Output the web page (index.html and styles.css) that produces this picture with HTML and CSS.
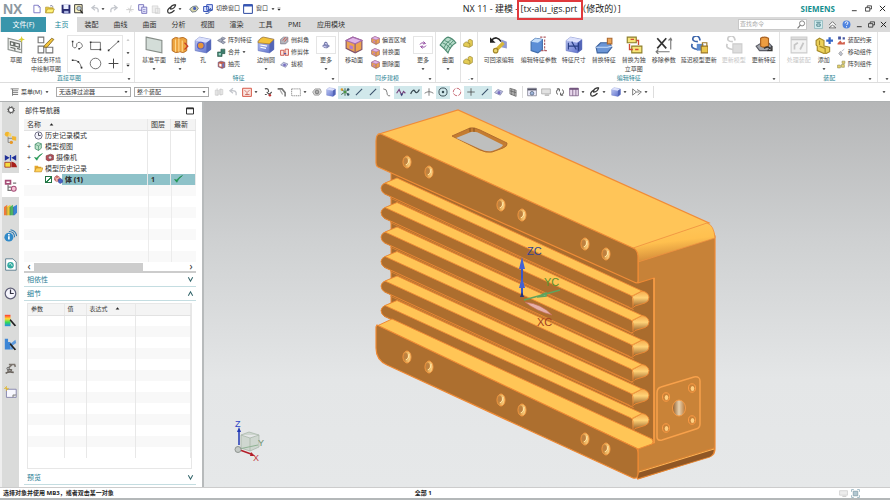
FILE: index.html
```html
<!DOCTYPE html>
<html lang="zh-CN">
<head>
<meta charset="utf-8">
<title>NX 11 - 建模</title>
<link rel="stylesheet" href="styles.css">
</head>
<body>
<svg class="defs" aria-hidden="true">
  <defs>
    <linearGradient id="gBlue" x2="1" y2="1"><stop offset="0" stop-color="#c4cdf5"/><stop offset="1" stop-color="#5468c8"/></linearGradient>
    <linearGradient id="gRain" x2="0" y2="1"><stop offset="0" stop-color="#f33"/><stop offset=".35" stop-color="#fd3"/><stop offset=".65" stop-color="#3d5"/><stop offset="1" stop-color="#28e"/></linearGradient>
    <linearGradient id="gEnd" x2="0" y2="1"><stop offset="0" stop-color="#f5a94a"/><stop offset=".4" stop-color="#ffd277"/><stop offset="1" stop-color="#8c5220"/></linearGradient>
    <linearGradient id="gRound" x2=".25" y2="1"><stop offset="0" stop-color="#ffc95c"/><stop offset=".55" stop-color="#ffc04f"/><stop offset="1" stop-color="#d18838"/></linearGradient>
    <linearGradient id="gHole" x2="1"><stop offset="0" stop-color="#a86a2c"/><stop offset=".45" stop-color="#e9ad58"/><stop offset="1" stop-color="#ffdc90"/></linearGradient>
    <linearGradient id="gBore" x2="1"><stop offset="0" stop-color="#8e5824"/><stop offset=".5" stop-color="#e8d2b0"/><stop offset="1" stop-color="#b77431"/></linearGradient>
  </defs>
  <symbol id="new" viewBox="0 0 16 16"><path d="M3 2h7l3 3v9H3z" fill="#fff" stroke="#7d78c4" stroke-width="1.5"/><path d="M10 2v3h3" fill="none" stroke="#7d78c4"/></symbol>
  <symbol id="open" viewBox="0 0 16 16"><path d="M1 5h5l1 1h6v8H1z" fill="#e9c944" stroke="#a68c1e"/><path d="M1 14l3-6h11l-3 6z" fill="#fff27a" stroke="#a68c1e"/><path d="M8 3q4-2 5 2" fill="none" stroke="#557"/></symbol>
  <symbol id="save" viewBox="0 0 16 16"><path d="M1 1h14v14H3l-2-2z" fill="#2b2d72"/><path d="M4 1h8v7H4z" fill="#e9edff"/><path d="M5 11h7v4H5z" fill="#aab3e0"/></symbol>
  <symbol id="saveas" viewBox="0 0 16 16"><path d="M1 1h12v13H1z" fill="#fff8c7" stroke="#333" stroke-width="1.5"/><circle cx="8" cy="7" r="3.5" fill="#bcd" stroke="#444"/><path d="M10 10l4 5" stroke="#222" stroke-width="2"/></symbol>
  <symbol id="undo" viewBox="0 0 16 16"><path d="M13 13V9Q12 5 4 6M8 2L3 6l5 4" fill="none" stroke="#c3c6cc" stroke-width="2"/></symbol>
  <symbol id="redo" viewBox="0 0 16 16"><path d="M3 13V9Q4 5 12 6M8 2l5 4-5 4" fill="none" stroke="#c3c6cc" stroke-width="2"/></symbol>
  <symbol id="cut" viewBox="0 0 16 16"><path d="M2 9h12M10 2L7 14M5 6l6 6" fill="none" stroke="#ccc" stroke-width="1.5"/></symbol>
  <symbol id="copy" viewBox="0 0 16 16"><path d="M1 1h8v9H1z" fill="#f1efff" stroke="#706bb8" stroke-width="1.4"/><path d="M6 5h8v10H6z" fill="#e5e6fc" stroke="#706bb8" stroke-width="1.4"/><path d="M8 9h4M8 12h4" stroke="#706bb8"/></symbol>
  <symbol id="paste" viewBox="0 0 16 16"><path d="M2 3h9v11H2zM7 7h7v8H7z" fill="#eee" stroke="#ccc"/></symbol>
  <symbol id="brush" viewBox="0 0 16 16"><path d="M14 1Q5 2 6 8q6 0 8-7M6 5q-7 4-4 9q4 2 10-4" fill="none" stroke="#333" stroke-width="2"/></symbol>
  <symbol id="touch" viewBox="0 0 16 16"><path d="M1 8l5-4 6-1 3 4-4 5-6 1z" fill="#d8d5a8" stroke="#567" stroke-width="1.2"/><circle cx="9" cy="7" r="2.5" fill="#4660b8"/></symbol>
  <symbol id="switch" viewBox="0 0 16 16"><path d="M1 4h8v8H1zM6 1h9v9H6z" fill="#dbe4ff" stroke="#3a55b8" stroke-width="1.6"/><path d="M4 15q7 1 8-6M9 10l3-3 2 4" fill="none" stroke="#234aa8" stroke-width="1.5"/></symbol>
  <symbol id="win" viewBox="0 0 16 16"><path d="M1 1h14v14H1z" fill="#fff" stroke="#2c49a0" stroke-width="1.6"/><path d="M1 1h14v3H1z" fill="#3556b8"/></symbol>
  <symbol id="down" viewBox="0 0 16 16"><path d="M2 5h12l-6 7z" fill="#222"/></symbol>
  <symbol id="up" viewBox="0 0 16 16"><path d="M2 11h12L8 4z" fill="#222"/></symbol>
  <symbol id="more" viewBox="0 0 16 16"><path d="M2 8h12l-6 7zM2 3h12v2H2z" fill="#222"/></symbol>
  <symbol id="chevd" viewBox="0 0 16 16"><path d="M3 3l5 9 5-9" fill="none" stroke="#33656b" stroke-width="2.4"/></symbol>
  <symbol id="chevu" viewBox="0 0 16 16"><path d="M3 13l5-9 5 9" fill="none" stroke="#33656b" stroke-width="2.4"/></symbol>
  <symbol id="min" viewBox="0 0 16 16"><path d="M2 13h11" stroke="#222" stroke-width="2"/></symbol>
  <symbol id="restore" viewBox="0 0 16 16"><path d="M5 5V2h10v7h-4M1 6h10v8H1z" fill="none" stroke="#222" stroke-width="1.8"/></symbol>
  <symbol id="close" viewBox="0 0 16 16"><path d="M2 2l12 12M14 2L2 14" stroke="#222" stroke-width="2.2"/></symbol>
  <symbol id="max" viewBox="0 0 16 16"><path d="M1 2h14v12H1z" fill="none" stroke="#333" stroke-width="2"/><path d="M1 3h14" stroke="#333" stroke-width="3"/></symbol>
  <symbol id="search" viewBox="0 0 16 16"><circle cx="9" cy="6" r="4.5" fill="#fff" stroke="#777" stroke-width="1.6"/><path d="M6 9l-5 6" stroke="#777" stroke-width="2"/></symbol>
  <symbol id="screen" viewBox="0 0 16 16"><path d="M1 1h14v14H1z" fill="#d6eef0" stroke="#69a4ac"/><path d="M4 4h8M5 7h6v4H5z" fill="none" stroke="#3b727c" stroke-width="1.5"/></symbol>
  <symbol id="ribup" viewBox="0 0 16 16"><path d="M2 9l6-6 6 6M2 14l6-5 6 5z" fill="#fff" stroke="#555" stroke-width="1.4"/></symbol>
  <symbol id="help" viewBox="0 0 16 16"><circle cx="8" cy="8" r="7" fill="#4f83df"/><path d="M5.500 6q0-3 2.500-3t2.500 2q0 2-2.500 4M8 11v2" fill="none" stroke="#fff" stroke-width="1.700"/></symbol>
  <symbol id="sketch" viewBox="0 0 16 16"><path d="M1 2l12 3v10L1 12z" fill="#eef0ee" stroke="#8c918d"/><path d="M3 5l3 .7v3L3 8zM7 6l4 1v3L7 9zM3 10l4 1v2M9 11l3 1" fill="none" stroke="#646a65"/><path d="M13 0l.8 2.200L16 3l-2.200.8L13 6l-.8-2.200L10 3l2.200-.8z" fill="#d9cf35"/></symbol>
  <symbol id="tasksketch" viewBox="0 0 16 16"><path d="M1 1h5v5H1zM1 9h5v6H1zM8 10h6v5H8z" fill="#fff" stroke="#777"/><path d="M6 10l1-2 6-6 2 1-6 7z" fill="#f2c43c" stroke="#775c1d" stroke-width=".7"/></symbol>
  <symbol id="profile" viewBox="0 0 16 16"><path d="M2 3v6q3 4 5 0V6q3-4 6 0t-3 6" fill="none" stroke="#555"/><path d="M1 2h2v2H1zM9 11h2v2H9z" fill="#333"/></symbol>
  <symbol id="rect" viewBox="0 0 16 16"><path d="M2 4h12v9H2z" fill="none" stroke="#555"/><path d="M1 3h2v2H1zM13 12h2v2h-2z" fill="#333"/></symbol>
  <symbol id="line" viewBox="0 0 16 16"><path d="M2 14L14 3" stroke="#555"/><path d="M1 13h2v2H1zM13 2h2v2h-2z" fill="#333"/></symbol>
  <symbol id="arc" viewBox="0 0 16 16"><path d="M2 4q9-1 11 10" fill="none" stroke="#555"/><path d="M1 3h2v2H1zM8 5h2v2H8zM12 12h2v2h-2z" fill="#333"/></symbol>
  <symbol id="circle" viewBox="0 0 16 16"><circle cx="8" cy="8" r="6.500" fill="none" stroke="#555"/></symbol>
  <symbol id="plus" viewBox="0 0 16 16"><path d="M8 2v12M2 8h12" stroke="#444" stroke-width="1.200"/></symbol>
  <symbol id="plane" viewBox="0 0 16 16"><path d="M1 1l14 3v11L1 12z" fill="#d3ddd8" stroke="#868d88"/></symbol>
  <symbol id="extrude" viewBox="0 0 16 16"><path d="M1 3q3-3 6-1q4-2 7 1v10q-3 3-6 1q-4 2-7-1z" fill="#eda33e" stroke="#a9601c" stroke-width=".7"/><path d="M4 3v11M7 2v12M10 4v10" stroke="#ffd78d"/><path d="M12 6l3 3-3 3" fill="none" stroke="#c83827"/></symbol>
  <symbol id="cube" viewBox="0 0 16 16"><path d="M1 4l4-3 10 2v9l-4 3-10-2z" fill="url(#gBlue)" stroke="#6272bd" stroke-width=".5"/><path d="M1 4l10 2 4-3L5 1z" fill="#dce1fc"/><path d="M11 6l4-3v9l-4 3z" fill="#5365b7"/></symbol>
  <symbol id="hole" viewBox="0 0 16 16"><use href="#cube"/><circle cx="6" cy="8.500" r="3" fill="#e5943a" stroke="#585fc2"/></symbol>
  <symbol id="blend" viewBox="0 0 16 16"><use href="#cube"/><path d="M1 5q2-4 5-4l9 2-4 4-10-1z" fill="#f3c23a" stroke="#a47622" stroke-width=".6"/><path d="M3 8l6 1M3 10l5 1" stroke="#fff"/></symbol>
  <symbol id="pattern" viewBox="0 0 16 16"><path d="M1 8l5-3 5 2-5 4zM7 4l3-2 5 2-3 3zM7 11l3-2 5 2-4 3z" fill="#a6abc0" stroke="#5f657b"/></symbol>
  <symbol id="unite" viewBox="0 0 16 16"><path d="M1 7h6V2h7v8H9v5H1z" fill="#3d7c6d" stroke="#23503f"/><path d="M3 9h4v4H3z" fill="#9bd4c3"/></symbol>
  <symbol id="shell" viewBox="0 0 16 16"><path d="M2 4l5-2 7 2v9l-5 2-7-3z" fill="#c45b46" stroke="#5b5b8e"/><path d="M4 6l4 1v5l-4-1z" fill="#fff"/><path d="M11 6v7" stroke="#6576c6" stroke-width="3"/></symbol>
  <symbol id="solid" viewBox="0 0 16 16"><path d="M1 4l4-3 5 3v5l-5 3-4-3z" fill="#d9776e" stroke="#9b3e46"/><path d="M1 4l4 3 5-3M5 7v5" fill="none" stroke="#fff"/><path d="M8 8l4-2 3 3v4l-4 2-3-2z" fill="#4a62c4" stroke="#2c3f96"/></symbol>
  <symbol id="chamfer" viewBox="0 0 16 16"><path d="M1 6l5-4h8v8l-4 4H1z" fill="#b6b6bc" stroke="#66667a"/><path d="M5 8l5-6M8 10l5-6" stroke="#d74f42" stroke-width="1.500"/></symbol>
  <symbol id="trim" viewBox="0 0 16 16"><path d="M1 4h6v9H1zM9 2h6v11H9z" fill="#fbe3dd" stroke="#c84a3c" stroke-width="1.500"/><path d="M7 10h4" stroke="#4b56a8" stroke-width="2"/></symbol>
  <symbol id="draft" viewBox="0 0 16 16"><path d="M1 9l5-5 8 3-4 6z" fill="#c3c7e6" stroke="#6b6e96"/><circle cx="8" cy="9" r="2.500" fill="#7a71c2"/></symbol>
  <symbol id="body" viewBox="0 0 16 16"><path d="M1 10l3-3 2-5 4 1 1 4 4 3-5 4-6-1z" fill="#8288b8" stroke="#4b518a"/><path d="M6 5l4 1M3 11l6 1" stroke="#ded9fa" stroke-width="2"/></symbol>
  <symbol id="moveface" viewBox="0 0 16 16"><path d="M1 4l6-3 8 3v8l-6 3-8-4z" fill="#eda24f" stroke="#80516a"/><path d="M1 4l8 3 6-3-8-3z" fill="#e1b6e8" stroke="#a56bb0"/><path d="M9 7v8" stroke="#8a5c7c"/><path d="M4 8l3 1v3l-3-1z" fill="#b47ad1"/></symbol>
  <symbol id="cycle" viewBox="0 0 16 16"><path d="M2 7q2-5 8-3M14 9q-2 5-8 3M9 1l4 4-5 1M7 15l-4-4 5-1" fill="none" stroke="#9550a4" stroke-width="2"/></symbol>
  <symbol id="surface" viewBox="0 0 16 16"><path d="M1 8q5-7 7-7q4 1 7 5-5 3-7 9-3-4-7-7z" fill="#b6dcca" stroke="#4f8c73"/><path d="M3 6q4 1 7 5M5 4q4 1 7 5M4 11q2-5 7-8M6 13q2-5 7-9" fill="none" stroke="#4f8c73" stroke-width=".8"/></symbol>
  <symbol id="gold" viewBox="0 0 16 16"><path d="M1 9l4-3 3 2V4l3-2 4 2v8l-5 3-9-2z" fill="#e4cc55" stroke="#94802c"/><path d="M8 8l3 1v5" fill="none" stroke="#8b772a"/></symbol>
  <symbol id="rollback" viewBox="0 0 16 16"><path d="M1 4q5-5 9 1" fill="none" stroke="#222" stroke-width="1.500"/><path d="M0 1v5h5z" fill="#222"/><path d="M10 3l5 2v6l-5-1z" fill="#919bd0"/><path d="M12 6L6 12" stroke="#d8b839" stroke-width="3"/><circle cx="5" cy="13" r="2" fill="#ead46b" stroke="#a28527"/></symbol>
  <symbol id="editpar" viewBox="0 0 16 16"><path d="M1 5l4-3 6 1v9l-4 3-6-2z" fill="#5b8ed6" stroke="#416eab"/><path d="M1 5l6 1 4-3-6-1z" fill="#c2dcf8"/><path d="M9 1h5M13 3v10M10 13h5" stroke="#ad5c63" stroke-dasharray="2 1"/></symbol>
  <symbol id="dim" viewBox="0 0 16 16"><use href="#cube"/><path d="M3 12V6M3 9h9M12 6v7M6 5l4 7" stroke="#293f86" fill="none"/></symbol>
  <symbol id="replace" viewBox="0 0 16 16"><path d="M1 10l4-4h8l2 4-4 5H2z" fill="#6b95d6" stroke="#3f649e"/><path d="M1 10h10l4-1" stroke="#c8ddfa" fill="none"/><path d="M11 2h4v5h-4z" fill="#eda556" stroke="#ac6930"/></symbol>
  <symbol id="repsketch" viewBox="0 0 16 16"><path d="M2 1h8v5H2zM6 9h9v6H6z" fill="#f7e579" stroke="#8c7d28"/><path d="M4 7v5h3M12 8V4h-2M5 3h3M9 12h3" fill="none" stroke="#d14b34" stroke-width="1.200"/></symbol>
  <symbol id="removepar" viewBox="0 0 16 16"><path d="M2 2l8 9M10 2l-8 9" stroke="#333" stroke-width="1.500"/><path d="M1 14h12M14 2v10M12 4l2-2 1 2M3 12l-2 2 2 2" fill="none" stroke="#777"/></symbol>
  <symbol id="delay" viewBox="0 0 16 16"><path d="M7 5Q1 5 3 1q5-3 6 3M2 7q-2 4 5 5" fill="none" stroke="#3c65aa" stroke-width="1.500"/><path d="M6 7h6v6H6z" fill="#5d8cd0"/><path d="M10 9h6v6h-6z" fill="#eac64d" stroke="#9b7626"/><path d="M11 9V6h4v3" fill="none" stroke="#9b7626"/></symbol>
  <symbol id="updmodel" viewBox="0 0 16 16"><path d="M7 5Q1 5 3 1q5-3 6 3M2 7q-2 4 5 5" fill="none" stroke="#ccc" stroke-width="1.500"/><path d="M7 7h8v8H7z" fill="#ddd" stroke="#ccc"/></symbol>
  <symbol id="updfeat" viewBox="0 0 16 16"><path d="M1 9l5-3h6l3 3-4 4H4z" fill="#a5a7ad" stroke="#5a5c65"/><path d="M5 2q3-2 7 0v7q-4 2-7 0z" fill="#ec9d42" stroke="#a86020"/><path d="M8 11q4-3 6 1M15 9v4h-4" fill="none" stroke="#333" stroke-width="1.300"/></symbol>
  <symbol id="process" viewBox="0 0 16 16"><path d="M1 1h14v14H1z" fill="#f3f3f3" stroke="#ccc"/><path d="M1 3h14M4 12V8l3-2M9 12l3-6" stroke="#c6c6c6" stroke-width="1.500" fill="none"/></symbol>
  <symbol id="add" viewBox="0 0 16 16"><path d="M1 4l3-2 4 2v5l5 1v4l-4 2-7-3V9L1 8z" fill="#ecd15b" stroke="#a58a29"/><path d="M4 9l5 2v4M4 4v4" fill="none" stroke="#a58a29"/><path d="M13 1v6M10 4h6" stroke="#3767c7" stroke-width="2"/></symbol>
  <symbol id="constraint" viewBox="0 0 16 16"><path d="M2 1h5v5H2zM10 2h4v4h-4z" fill="#4656a0"/><path d="M1 13l5-5 3 4 5-2v5H1z" fill="#d3604c"/></symbol>
  <symbol id="movecomp" viewBox="0 0 16 16"><path d="M3 10l3-4 4 4-3 4z" fill="#bfc3cf" stroke="#888"/><path d="M8 6l5-4" stroke="#889"/></symbol>
  <symbol id="pattcomp" viewBox="0 0 16 16"><path d="M1 9h5v5H1zM8 8h5v5H8zM9 2h5v4H9z" fill="#e6d36f" stroke="#8d8549"/></symbol>
  <symbol id="ghost" viewBox="0 0 16 16"><path d="M2 5h5v8H2zM9 4h5v8H9zM5 2v12M11 2v12" fill="#eee" stroke="#c3c3c3"/></symbol>
  <symbol id="redbox" viewBox="0 0 16 16"><path d="M1 2h14v13H1z" fill="#fbe4df" stroke="#d4503f" stroke-width="1.500"/><path d="M4 5l3 3m5-3L9 8M5 12h7M8 8v4" stroke="#b53a2d"/></symbol>
  <symbol id="snaparrow" viewBox="0 0 16 16"><path d="M3 3q6-2 6 5M6 8l4 4 4-4M3 12h3" fill="none" stroke="#555" stroke-width="1.700"/><circle cx="11" cy="13" r="2" fill="#b33"/></symbol>
  <symbol id="flagd" viewBox="0 0 16 16"><path d="M1 3h7l5 6v6" fill="none" stroke="#777" stroke-width="2.500"/><path d="M5 5l4 7" stroke="#aaa" stroke-width="2"/></symbol>
  <symbol id="dashbox" viewBox="0 0 16 16"><path d="M1 3h14v11H1z" fill="none" stroke="#555" stroke-dasharray="2 1"/></symbol>
  <symbol id="wire" viewBox="0 0 16 16"><path d="M1 8l4-5h8l2 5-4 5H4z" fill="#ddd" stroke="#777"/><circle cx="8" cy="8" r="3" fill="#aaa" stroke="#555"/></symbol>
  <symbol id="snap" viewBox="0 0 16 16"><path d="M2 4l12 8M14 4L2 12M8 2v12" stroke="#3d6249" stroke-width="1.500"/><circle cx="3" cy="4" r="2" fill="#d89b28"/><circle cx="13" cy="12" r="2" fill="#356"/><circle cx="13" cy="4" r="2" fill="#356"/><circle cx="8" cy="8" r="2" fill="#4a9b46"/></symbol>
  <symbol id="seg" viewBox="0 0 16 16"><path d="M3 13L13 3" stroke="#38506a" stroke-width="1.800"/></symbol>
  <symbol id="curve" viewBox="0 0 16 16"><path d="M2 3q6 0 6 6t5 5" fill="none" stroke="#777" stroke-width="1.500"/></symbol>
  <symbol id="poly" viewBox="0 0 16 16"><path d="M1 10l4-6 4 9 3-6 3 3" fill="none" stroke="#75427e" stroke-width="1.800"/><circle cx="9" cy="12" r="1.500" fill="#247"/></symbol>
  <symbol id="wave" viewBox="0 0 16 16"><path d="M1 11q4-9 7-4t7-3" fill="none" stroke="#3b4b53" stroke-width="2"/></symbol>
  <symbol id="inter" viewBox="0 0 16 16"><path d="M1 10q7-5 14 0M8 2v12" fill="none" stroke="#666" stroke-width="1.300"/></symbol>
  <symbol id="center" viewBox="0 0 16 16"><circle cx="8" cy="8" r="6.500" fill="none" stroke="#354c53" stroke-width="1.500"/><circle cx="8" cy="8" r="2" fill="#354c53"/></symbol>
  <symbol id="quad" viewBox="0 0 16 16"><circle cx="8" cy="8" r="6" fill="none" stroke="#c66a74" stroke-width="1.500" stroke-dasharray="7 2"/></symbol>
  <symbol id="grid" viewBox="0 0 16 16"><path d="M3 2l10 3v10L3 11zM6 3v10M10 4v10M3 6l10 3" fill="#bbb" stroke="#555"/></symbol>
  <symbol id="window" viewBox="0 0 16 16"><path d="M1 2h14v12H1z" fill="#eef" stroke="#667"/><path d="M1 4h14" stroke="#556" stroke-width="3"/><circle cx="8" cy="10" r="3" fill="#9db2d8" stroke="#456"/></symbol>
  <symbol id="note" viewBox="0 0 16 16"><path d="M1 3h14v8H1z" fill="#e2e2e2" stroke="#999"/><path d="M6 13h7" stroke="#aaa" stroke-width="2"/></symbol>
  <symbol id="refresh" viewBox="0 0 16 16"><path d="M4 12Q0 6 6 3M12 4q4 6-2 9M3 3h4v4M13 13H9V9" fill="none" stroke="#555" stroke-width="1.600"/></symbol>
  <symbol id="table" viewBox="0 0 16 16"><path d="M1 2h14v12H1zM6 2v12M11 2v12" fill="#e8d8ec" stroke="#73557e" stroke-width="1.200"/><path d="M1 3h14" stroke="#73557e" stroke-width="3"/></symbol>
  <symbol id="tape" viewBox="0 0 16 16"><path d="M1 3l6 5-6 5zM8 4l7 4-6 5M7 8h5" fill="none" stroke="#666" stroke-width="1.300"/></symbol>
  <symbol id="fit" viewBox="0 0 16 16"><path d="M4 4h8v8H4z" fill="#7fa3b4" stroke="#3d6678" stroke-width="1.500"/><path d="M1 5V1h4M11 1h4v4M15 11v4h-4M5 15H1v-4" fill="none" stroke="#4d7d92" stroke-width="1.500"/></symbol>
  <symbol id="menu" viewBox="0 0 16 16"><path d="M1 3h13M4 6h9M4 9h9M4 12h9M4 3v11" stroke="#777" stroke-width="1.500"/></symbol>
  <symbol id="gear" viewBox="0 0 16 16"><circle cx="8" cy="8" r="4" fill="#fff" stroke="#555" stroke-width="1.800"/><circle cx="8" cy="8" r="5.500" fill="none" stroke="#555" stroke-width="1.500" stroke-dasharray="2 2.300"/></symbol>
  <symbol id="asm" viewBox="0 0 16 16"><path d="M5 7v7h6M5 9h9" fill="none" stroke="#777"/><circle cx="4" cy="4" r="3" fill="#f2b62f"/><path d="M6 2l3 1v4l-4-1z" fill="#f7d467"/><path d="M10 6l5 1v5l-5-1z" fill="#f2b62f"/><circle cx="9" cy="14" r="2" fill="#e89927"/></symbol>
  <symbol id="constr" viewBox="0 0 16 16"><path d="M1 0l6 3.500L1 7zM15 0L9 3.500 15 7z" fill="#1f2f96"/><path d="M8 0v7" stroke="#2344ba" stroke-width="1.500"/><path d="M1 9h7v6H1z" fill="#f6dc3c" stroke="#a32a20"/><path d="M9 15V8q6 1 7 7z" fill="#a8201c"/></symbol>
  <symbol id="partnav" viewBox="0 0 16 16"><path d="M2 2h6v4H2z" fill="#fff" stroke="#a64e77" stroke-width="2"/><path d="M5 7v7h4M5 10h4M11 5h4" fill="none" stroke="#777" stroke-width="1.500"/><circle cx="12" cy="12" r="3" fill="#f5c2d4" stroke="#a64e77" stroke-width="1.300"/></symbol>
  <symbol id="books" viewBox="0 0 16 16"><path d="M0 5l4-3v13H0z" fill="#ef7a3b"/><path d="M3 5l5-3v13H3z" fill="#f0c634"/><path d="M7 5l4-3v13H7z" fill="#4bb75e"/><path d="M11 5l5-3v10l-3 3h-2z" fill="#3884d3"/><path d="M3.500 5v10M7.500 5v10M11.500 5v10" stroke="#5c6b50" stroke-width=".6"/></symbol>
  <symbol id="info" viewBox="0 0 16 16"><circle cx="6" cy="10" r="5.500" fill="#318ac8"/><path d="M6 9v4M6 6v2" stroke="#fff" stroke-width="2"/><path d="M6 3q7 0 7 7M8 .8q7 1 7.500 8" fill="none" stroke="#327bb0" stroke-width="1.300"/></symbol>
  <symbol id="web" viewBox="0 0 16 16"><path d="M2 1h9l4 4v10H2z" fill="#fff" stroke="#446c80"/><circle cx="8" cy="9" r="4" fill="#31aaa0"/><path d="M6 8q3-3 4 2" stroke="#fff" fill="none"/></symbol>
  <symbol id="clock" viewBox="0 0 16 16"><circle cx="8" cy="8" r="6.500" fill="#f4f4fc" stroke="#606078" stroke-width="1.500"/><path d="M8 3v5h4" fill="none" stroke="#334" stroke-width="1.500"/></symbol>
  <symbol id="color" viewBox="0 0 16 16"><path d="M1 1h7v14H1z" fill="url(#gRain)"/><path d="M8 6l7 8-2 1-6-7z" fill="#222"/></symbol>
  <symbol id="bluepick" viewBox="0 0 16 16"><path d="M1 1h4v4h3v9H1z" fill="#3d86d6"/><path d="M8 7l6-5 1 4-4 3v5H8z" fill="#5d99dc"/><path d="M8 6l7 8-2 1-6-7z" fill="#222"/></symbol>
  <symbol id="machine" viewBox="0 0 16 16"><path d="M6 3h7l1 3M10 3L5 8v4" fill="none" stroke="#7b746e" stroke-width="2"/><path d="M2 14q4-3 10-1M4 9l6 1" fill="none" stroke="#69635d" stroke-width="2"/><circle cx="5" cy="8" r="1.500" fill="#bbb" stroke="#666"/></symbol>
  <symbol id="newnote" viewBox="0 0 16 16"><path d="M3 4h12v10H3z" fill="#f8f8ff" stroke="#7778a2"/><path d="M11 14v-3h4" fill="#ccc" stroke="#777"/><path d="M3 0v6M0 3h6M1 1l4 4" stroke="#dfb83a"/></symbol>
  <symbol id="check" viewBox="0 0 16 16"><path d="M1 8l4 5Q8 6 15 1Q8 4 5 9z" fill="#1ea557" stroke="#168444"/></symbol>
  <symbol id="camera" viewBox="0 0 16 16"><path d="M2 5l8-3 5 2v8l-9 2-4-2z" fill="#bd4b58" stroke="#633"/><circle cx="9" cy="8" r="3" fill="#eddbe1" stroke="#544"/></symbol>
  <symbol id="folder" viewBox="0 0 16 16"><path d="M1 3h6l1 2h5v9H1z" fill="#e6a82c"/><path d="M1 14l3-7h12l-3 7z" fill="#ffd35b" stroke="#bd8525"/></symbol>
  <symbol id="views" viewBox="0 0 16 16"><path d="M2 4l5-3 6 2v8l-5 4-6-3z" fill="#bfe3cc" stroke="#35845d" stroke-width="1.300"/><path d="M2 4l6 3 5-4M8 7v8" fill="none" stroke="#35845d"/></symbol>
</svg>

<header class="titlebar">
  <div class="qat">
    <span class="nx">NX</span>
    <button aria-label="新建"><svg><use href="#new"/></svg></button>
    <button aria-label="打开"><svg><use href="#open"/></svg></button>
    <i class="gap"></i>
    <button aria-label="保存"><svg><use href="#save"/></svg></button>
    <button aria-label="另存为"><svg><use href="#saveas"/></svg></button>
    <i class="gap"></i>
    <button aria-label="撤消"><svg><use href="#undo"/></svg></button>
    <svg class="caret"><use href="#down"/></svg>
    <button aria-label="重做"><svg><use href="#redo"/></svg></button>
    <i class="gap"></i>
    <button aria-label="剪切"><svg><use href="#cut"/></svg></button>
    <button aria-label="复制"><svg><use href="#copy"/></svg></button>
    <button aria-label="粘贴"><svg><use href="#paste"/></svg></button>
    <i class="gap"></i>
    <button aria-label="重复命令"><svg><use href="#brush"/></svg></button>
    <svg class="caret"><use href="#down"/></svg>
    <i class="gap"></i>
    <button aria-label="触控"><svg><use href="#touch"/></svg></button>
    <i class="gap"></i>
    <button class="text"><svg><use href="#switch"/></svg>切换窗口</button>
    <button class="text"><svg><use href="#win"/></svg>窗口</button>
    <svg class="caret"><use href="#down"/></svg>
    <svg class="caret"><use href="#more"/></svg>
  </div>
  <h1>NX 11 - 建模 - <span class="mark">[tx-alu_igs.prt</span>（修改的）]</h1>
  <span class="brand">SIEMENS</span>
  <div class="wincontrols">
    <button aria-label="最小化"><svg><use href="#min"/></svg></button>
    <button aria-label="还原"><svg><use href="#restore"/></svg></button>
    <button aria-label="关闭"><svg><use href="#close"/></svg></button>
  </div>
</header>

<nav class="tabs">
  <button class="file">文件(F)</button>
  <button class="active">主页</button>
  <button>装配</button><button>曲线</button><button>曲面</button><button>分析</button><button>视图</button><button>渲染</button><button>工具</button><button>PMI</button><button class="wide">应用模块</button>
  <label class="search"><input type="text" placeholder="查找命令" aria-label="查找命令"><svg><use href="#search"/></svg></label>
  <div class="tabtools">
    <button aria-label="全屏"><svg><use href="#screen"/></svg></button>
    <button aria-label="最小化功能区"><svg><use href="#ribup"/></svg></button>
    <button aria-label="帮助"><svg><use href="#help"/></svg></button>
    <button aria-label="最小化文档"><svg><use href="#min"/></svg></button>
    <button aria-label="还原文档"><svg><use href="#restore"/></svg></button>
    <button aria-label="关闭文档"><svg><use href="#close"/></svg></button>
  </div>
</nav>

<section class="ribbon">
  <div class="group g-sketch">
    <div class="items">
      <button class="big w22"><svg><use href="#sketch"/></svg>草图</button>
      <button class="big w38"><svg><use href="#tasksketch"/></svg>在任务环境<br>中绘制草图</button>
      <div class="gallery">
        <button aria-label="轮廓"><svg><use href="#profile"/></svg></button><button aria-label="矩形"><svg><use href="#rect"/></svg></button><button aria-label="直线"><svg><use href="#line"/></svg></button>
        <button aria-label="圆弧"><svg><use href="#arc"/></svg></button><button aria-label="圆"><svg><use href="#circle"/></svg></button><button aria-label="点"><svg><use href="#plus"/></svg></button>
      </div>
      <div class="scroller"><svg class="caret faint"><use href="#up"/></svg><svg class="caret"><use href="#down"/></svg><svg class="caret"><use href="#more"/></svg></div>
    </div>
    <footer>直接草图<svg class="caret"><use href="#down"/></svg></footer>
  </div>
  <div class="group g-feature">
    <div class="items">
      <button class="big w28"><svg><use href="#plane"/></svg>基准平面<svg class="caret"><use href="#down"/></svg></button>
      <button class="big w22"><svg><use href="#extrude"/></svg>拉伸<svg class="caret"><use href="#down"/></svg></button>
      <button class="big w22"><svg><use href="#hole"/></svg>孔</button>
      <div class="stack">
        <button><svg><use href="#pattern"/></svg>阵列特征</button>
        <button><svg><use href="#unite"/></svg>合并 <svg class="caret"><use href="#down"/></svg></button>
        <button><svg><use href="#shell"/></svg>抽壳</button>
      </div>
      <button class="big w22"><svg><use href="#blend"/></svg>边倒圆<svg class="caret"><use href="#down"/></svg></button>
      <div class="stack">
        <button><svg><use href="#chamfer"/></svg>倒斜角</button>
        <button><svg><use href="#trim"/></svg>修剪体</button>
        <button><svg><use href="#draft"/></svg>拔模</button>
      </div>
      <button class="big w22 boxed"><svg><use href="#body"/></svg>更多<svg class="caret"><use href="#down"/></svg></button>
    </div>
    <footer>特征<svg class="caret"><use href="#down"/></svg></footer>
  </div>
  <div class="group g-sync">
    <div class="items">
      <button class="big w28"><svg><use href="#moveface"/></svg>移动面</button>
      <div class="stack">
        <button><svg><use href="#moveface"/></svg>偏置区域</button>
        <button><svg><use href="#moveface"/></svg>替换面</button>
        <button><svg><use href="#moveface"/></svg>删除面</button>
      </div>
      <button class="big w22 boxed"><svg><use href="#cycle"/></svg>更多<svg class="caret"><use href="#down"/></svg></button>
    </div>
    <footer>同步建模<svg class="caret"><use href="#down"/></svg></footer>
  </div>
  <div class="group">
    <div class="items">
      <button class="big w22"><svg><use href="#surface"/></svg>曲面<svg class="caret"><use href="#down"/></svg></button>
    </div>
  </div>
  <div class="group">
    <div class="items">
      <div class="pair">
        <button aria-label="标准化工具"><svg><use href="#gold"/></svg></button>
        <button aria-label="齿轮建模"><svg><use href="#gold"/></svg></button>
      </div>
    </div>
    <footer>.<svg class="caret"><use href="#down"/></svg></footer>
  </div>
  <div class="group g-edit">
    <div class="items">
      <button class="big w38"><svg><use href="#rollback"/></svg>可回滚编辑</button>
      <button class="big w38"><svg><use href="#editpar"/></svg>编辑特征参数</button>
      <button class="big w28"><svg><use href="#dim"/></svg>特征尺寸</button>
      <button class="big w28"><svg><use href="#replace"/></svg>替换特征</button>
      <button class="big w28"><svg><use href="#repsketch"/></svg>替换为独<br>立草图</button>
      <button class="big w28"><svg><use href="#removepar"/></svg>移除参数</button>
      <button class="big w38"><svg><use href="#delay"/></svg>延迟模型更新</button>
      <button class="big w28" disabled><svg><use href="#updmodel"/></svg>更新模型</button>
      <button class="big w28"><svg><use href="#updfeat"/></svg>更新特征</button>
    </div>
    <footer>编辑特征<svg class="caret"><use href="#down"/></svg></footer>
  </div>
  <div class="group g-asm">
    <div class="items">
      <button class="big w28" disabled><svg><use href="#process"/></svg>处理装配</button>
      <button class="big w22"><svg><use href="#add"/></svg>添加<svg class="caret"><use href="#down"/></svg></button>
      <div class="stack">
        <button><svg><use href="#constraint"/></svg>装配约束</button>
        <button><svg><use href="#movecomp"/></svg>移动组件</button>
        <button><svg><use href="#pattcomp"/></svg>阵列组件</button>
      </div>
    </div>
    <footer>装配<svg class="caret"><use href="#down"/></svg></footer>
  </div>
  <div class="group g-end"><footer><svg class="caret"><use href="#down"/></svg></footer></div>
</section>

<section class="selbar">
  <button class="menu"><svg><use href="#menu"/></svg>菜单(M)<svg class="caret"><use href="#down"/></svg></button>
  <div class="combo"><select aria-label="选择过滤器"><option>无选择过滤器</option></select><svg class="caret"><use href="#down"/></svg></div>
  <div class="combo"><select aria-label="选择范围"><option>整个装配</option></select><svg class="caret"><use href="#down"/></svg></div>
  <div class="tools">
    <button aria-label="最高选择优先级"><svg><use href="#ghost"/></svg></button>
    <button aria-label="后退"><svg><use href="#undo"/></svg></button>
    <button aria-label="选择组"><svg><use href="#redbox"/></svg></button><svg class="caret"><use href="#down"/></svg>
    <button aria-label="恢复"><svg><use href="#snaparrow"/></svg></button>
    <button aria-label="重选"><svg><use href="#flagd"/></svg></button>
    <button aria-label="矩形选择"><svg><use href="#dashbox"/></svg></button><svg class="caret"><use href="#down"/></svg>
    <button aria-label="线框"><svg><use href="#wire"/></svg></button>
    <button aria-label="实体"><svg><use href="#cube"/></svg></button>
    <button class="on" aria-label="捕捉点"><svg><use href="#snap"/></svg></button>
    <button class="on" aria-label="端点"><svg><use href="#seg"/></svg></button>
    <button class="on" aria-label="中点"><svg><use href="#seg"/></svg></button>
    <button aria-label="控制点"><svg><use href="#curve"/></svg></button>
    <button class="on" aria-label="极点"><svg><use href="#poly"/></svg></button>
    <button class="on" aria-label="定义点"><svg><use href="#wave"/></svg></button>
    <button aria-label="交点"><svg><use href="#inter"/></svg></button>
    <button class="on" aria-label="圆心"><svg><use href="#center"/></svg></button>
    <button aria-label="象限点"><svg><use href="#quad"/></svg></button>
    <button class="on" aria-label="现有点"><svg><use href="#plus"/></svg></button>
    <button class="on" aria-label="曲线上的点"><svg><use href="#seg"/></svg></button>
    <button aria-label="面上的点"><svg><use href="#draft"/></svg></button>
    <button aria-label="栅格点"><svg><use href="#grid"/></svg></button>
    <i class="sep"></i>
    <button aria-label="窗口"><svg><use href="#window"/></svg></button>
    <button aria-label="注释"><svg><use href="#note"/></svg></button>
    <button aria-label="刷新"><svg><use href="#refresh"/></svg></button>
    <button aria-label="表格"><svg><use href="#table"/></svg></button><svg class="caret"><use href="#down"/></svg>
    <button aria-label="渲染样式"><svg><use href="#brush"/></svg></button><svg class="caret"><use href="#down"/></svg>
    <button aria-label="视图方向"><svg><use href="#cube"/></svg></button><svg class="caret"><use href="#down"/></svg>
    <button aria-label="测量"><svg><use href="#tape"/></svg></button><svg class="caret"><use href="#down"/></svg>
    <i class="sep"></i>
  </div>
  <svg class="caret last"><use href="#down"/></svg>
</section>

<main class="work">
  <nav class="rail">
    <button aria-label="设置"><svg><use href="#gear"/></svg></button>
    <button aria-label="装配导航器"><svg><use href="#asm"/></svg></button>
    <button aria-label="约束导航器"><svg><use href="#constr"/></svg></button>
    <button class="active" aria-label="部件导航器"><svg><use href="#partnav"/></svg></button>
    <button aria-label="重用库"><svg><use href="#books"/></svg></button>
    <button aria-label="信息"><svg><use href="#info"/></svg></button>
    <button aria-label="浏览器"><svg><use href="#web"/></svg></button>
    <button aria-label="历史记录"><svg><use href="#clock"/></svg></button>
    <button aria-label="可视化"><svg><use href="#color"/></svg></button>
    <button aria-label="角色"><svg><use href="#bluepick"/></svg></button>
    <button aria-label="加工"><svg><use href="#machine"/></svg></button>
    <button aria-label="新建标记"><svg><use href="#newnote"/></svg></button>
  </nav>
  <aside class="panel">
    <header>部件导航器<button aria-label="最大化"><svg><use href="#max"/></svg></button></header>
    <div class="tree">
      <table>
        <colgroup><col><col class="c-layer"><col class="c-new"></colgroup>
        <thead><tr><th>名称 <svg class="caret"><use href="#up"/></svg></th><th>图层</th><th>最新</th></tr></thead>
        <tbody>
          <tr><td><span class="node"><i></i><svg><use href="#clock"/></svg>历史记录模式</span></td><td></td><td></td></tr>
          <tr><td><span class="node"><i>+</i><svg><use href="#views"/></svg>模型视图</span></td><td></td><td></td></tr>
          <tr><td><span class="node"><i>+</i><svg><use href="#check"/></svg><svg><use href="#camera"/></svg>摄像机</span></td><td></td><td></td></tr>
          <tr><td><span class="node"><i>-</i><svg><use href="#folder"/></svg>模型历史记录</span></td><td></td><td></td></tr>
          <tr class="selected"><td><span class="node child"><input type="checkbox" checked aria-label="显示体"><svg><use href="#solid"/></svg><b>体 (1)</b></span></td><td>1</td><td><svg><use href="#check"/></svg></td></tr>
        </tbody>
      </table>
      <div class="rest"></div>
      <div class="hscroll"><span>‹</span><div class="track"><div class="thumb"></div></div><span>›</span></div>
    </div>
    <button class="section">相依性<svg><use href="#chevd"/></svg></button>
    <button class="section">细节<svg><use href="#chevu"/></svg></button>
    <div class="details">
      <table>
        <colgroup><col class="d1"><col class="d2"><col class="d3"><col></colgroup>
        <thead><tr><th>参数</th><th>值</th><th>表达式 <svg class="caret"><use href="#up"/></svg></th><th></th></tr></thead>
        <tbody>
          <tr><td></td><td></td><td></td><td></td></tr><tr><td></td><td></td><td></td><td></td></tr><tr><td></td><td></td><td></td><td></td></tr><tr><td></td><td></td><td></td><td></td></tr><tr><td></td><td></td><td></td><td></td></tr><tr><td></td><td></td><td></td><td></td></tr><tr><td></td><td></td><td></td><td></td></tr><tr><td></td><td></td><td></td><td></td></tr><tr><td></td><td></td><td></td><td></td></tr><tr><td></td><td></td><td></td><td></td></tr><tr><td></td><td></td><td></td><td></td></tr><tr><td></td><td></td><td></td><td></td></tr><tr><td></td><td></td><td></td><td></td></tr>
        </tbody>
      </table>
    </div>
    <button class="section">预览<svg><use href="#chevd"/></svg></button>
  </aside>
  <section class="viewport">
    <svg viewBox="204 102 686 385" role="img" aria-label="三维模型">
      <defs>
        <g id="fin">
          <path d="M383 184L396 178L642 290L646 305L634 309L384 194Z" fill="#a96d2e"/>
          <path d="M383 184L397 178L642 291L632 297Z" fill="#ffc556"/>
          <path d="M385 183Q381 185 381 188Q381 192 385 194L629 307Q632 308 632 304V296Z" fill="#ad6e2e"/>
          <path d="M632 297L642 291Q648 292 649 297Q649 301 645 303L635 306L633 308Z" fill="url(#gEnd)"/>
          <path d="M397 178L642 291Q648 292 649 297Q649 302 645 303L635 306Q632 310 629 307L385 194Q381 192 381 188Q381 185 385 183ZM385 183L630 295Q633 296 633 299V307M632 296L642 291" fill="none" stroke="#ef8a35" stroke-width=".9"/>
          <path d="M390 198L634 310" stroke="#e78a38" stroke-width=".7"/>
        </g>
        <g id="bolt"><ellipse rx="4" ry="6" fill="url(#gHole)" stroke="#f49a43"/><ellipse cx="-1" cy="-1" rx="1.800" ry="3" fill="#bd8040"/><path d="M-1 3Q2 2 2-3" stroke="#ffe6a8" fill="none"/></g>
        <g id="bolts"><use href="#bolt" x="407" y="162"/><use href="#bolt" x="429" y="172"/><use href="#bolt" x="501" y="205"/><use href="#bolt" x="522" y="215"/><use href="#bolt" x="585" y="244"/><use href="#bolt" x="606" y="254"/></g>
        <g id="screw"><ellipse rx="3.500" ry="4.200" fill="#c98238" stroke="#ff9c45"/><ellipse cx=".5" cy=".5" rx="1.800" ry="2.500" fill="#ffd082"/></g>
      </defs>
      <path d="M391 165L640 275L656 276V446L638 452L391 335Z" fill="#aa6c2d" stroke="#ef8a35"/>
      <path d="M638 252L712 229L715 236V449Q715 454 711 456L638 479V448L654 443V278L638 283Z" fill="#c78238" stroke="#ef8a35" stroke-width="1.200"/>
      <path d="M654 278V443" stroke="#ffa64e" stroke-width="1.200"/>
      <use href="#fin"/><use href="#fin" y="24.500"/><use href="#fin" y="49"/><use href="#fin" y="73.500"/><use href="#fin" y="98"/><use href="#fin" y="122.500"/>
      <path d="M379 134L458 110L709 223L633 249Z" fill="#ffc558" stroke="#f18c36" stroke-width="1.200"/>
      <path d="M633 248L707 223Q714 225 715 238L638 262Q638 250 633 248Z" fill="url(#gRound)" stroke="#ef9140" stroke-width=".8"/>
      <path d="M452 136L470 128Q474 127 480 130L507 143Q508 146 503 148L492 152Q486 153 480 150Z" fill="#c47c31" stroke="#b16d30"/>
      <path d="M456 138L471 132Q476 131 481 134L503 145Q502 148 492 151Q486 152 480 149Z" fill="#bebfbe"/>
      <path d="M470 128v4M474 128v4" stroke="#83521f"/>
      <path d="M381 134L633 248Q638 250 638 257V281Q638 284 634 282L378 167Q376 166 376 163V141Q376 133 381 134Z" fill="#ad702f" stroke="#ef8d38" stroke-width="1.200"/>
      <path d="M377 326L392 319L652 439Q654 442 652 444L638 449Z" fill="#ffc556" stroke="#ef8a35"/>
      <path d="M377 325L634 447Q638 448 638 453V474Q638 479 633 478L387 365Q376 360 376 348V327Z" fill="#ad6f2f" stroke="#ef8a35" stroke-width="1.200"/>
      <path d="M639 471L714 448Q715 454 710 457L637 479Z" fill="#905725" stroke="#e88935" stroke-width=".8"/>
      <path d="M639 472L714 449" stroke="#ffb455" stroke-width="1.200"/>
      <use href="#bolts"/><use href="#bolts" y="195"/>
      <path d="M657 393Q657 388 661 387L694 377Q700 376 700 381V424Q700 428 696 429L662 440Q657 441 657 437Z" fill="#c98338" stroke="#f8a14b" stroke-width="1.500"/>
      <use href="#screw" x="666" y="397"/><use href="#screw" x="692" y="388"/><use href="#screw" x="666" y="428"/><use href="#screw" x="692" y="420"/>
      <ellipse cx="679" cy="408" rx="6.500" ry="8" fill="url(#gBore)" stroke="#f59b46"/>
      <path d="M522 296V262" stroke="#3957c8" stroke-width="2"/><path d="M522 257L519 269H525ZM522 277L519 288H525Z" fill="#4562d1"/><path d="M522 292l2 5h-4z" fill="#243474"/>
      <path d="M524 300L560 290M537 297l9-4v3z" stroke="#61a35d" stroke-width="1.500" fill="#86d8b4"/>
      <path d="M525 302Q542 304 552 315Q536 311 525 302Z" fill="#e6b1aa" stroke="#c66d57" stroke-width=".7"/>
      <text x="527" y="255" class="axis" fill="#33448e">ZC</text><text x="544" y="286" class="axis" fill="#5b922d">YC</text><text x="537" y="326" class="axis" fill="#a1401f">XC</text>
      <path d="M241 435L249 432L259 435V447L250 451L241 448ZM241 435L250 438L259 435M250 438V451" fill="#bfcdbf" fill-opacity=".6" stroke="#a4b2a5" stroke-width=".7"/>
      <path d="M239 449L258 445" stroke="#90b394"/><path d="M239 445V431" stroke="#2038b5" stroke-width="1.500"/><path d="M239 427l2 5h-4z" fill="#2038b5"/>
      <path d="M240 450L251 454" stroke="#b31d28" stroke-width="1.500"/><path d="M255 456l-5 0 1-4z" fill="#b31d28"/><circle cx="238" cy="449.500" r="3" fill="#c4c9c5" stroke="#909692"/>
      <text x="235" y="427" class="axis small" fill="#3044c7">Z</text><text x="258" y="446" class="axis small" fill="#6c8f6c">Y</text><text x="253" y="461" class="axis small" fill="#c43a42">X</text>
    </svg>
  </section>
</main>

<footer class="status"><span>选择对象并使用 MB3，或者双击某一对象</span><span class="count">全部 1</span><span class="sicons"><svg><use href="#note"/></svg><svg><use href="#fit"/></svg></span></footer>
</body>
</html>
```
FILE: styles.css
```css
* { box-sizing: border-box; }
body {
  margin: 0;
  height: 100vh;
  display: flex;
  flex-direction: column;
  overflow: hidden;
  background: #fff;
  color: #333;
  font: 6px/9px "Noto Sans", "Noto Sans CJK SC", sans-serif;
}
button, input, select { font: inherit; color: inherit; }
button { border: 0; padding: 0; background: none; display: flex; align-items: center; justify-content: center; }
svg { display: block; flex: none; width: 10px; height: 10px; }
svg.caret { width: 4px; height: 4px; }
.defs { position: absolute; width: 0; height: 0; }

.titlebar { display: flex; align-items: center; height: 17px; }
.qat { display: flex; align-items: center; padding-left: 3px; }
.qat button { width: 13px; }
.qat button.text { width: auto; gap: 3px; margin-right: 3px; }
.qat .caret { margin-right: 2px; }
.nx { font: bold 14px/16px "Liberation Sans", sans-serif; color: #8c98a0; width: 27px; }
.gap { width: 3px; }
.titlebar h1 { flex: 1; margin: 0; text-align: center; font: 9px/17px "Open Sans", "Noto Sans CJK SC", sans-serif; color: #222; white-space: nowrap; }
/* The frame round the file name overlaps the tab row below. */
.mark { position: relative; display: inline-block; }
.mark::after { content: ""; position: absolute; inset: 0 -6px -3px -4px; border: 2px solid #e0393d; }
.brand { font: bold 8px/16px "Open Sans", sans-serif; color: #169090; }
.wincontrols { display: flex; gap: 7px; padding: 0 4px 0 16px; }
.wincontrols svg, .tabtools svg { width: 7px; height: 7px; }

.tabs { display: flex; align-items: center; height: 15px; background: #dadada; padding: 0 3px 0 1px; font-size: 7px; }
.tabs > button { width: 29px; height: 15px; }
.tabs > .file { width: 45px; background: #3995ab; color: #fff; }
.tabs > .active { width: 31px; background: #fff; color: #19879b; }
.tabs > .wide { width: 44px; }
.search { display: flex; align-items: center; margin-left: auto; width: 69px; height: 11px; background: #fff; border: 1px solid #c8c8c8; }
.search input { flex: 1; min-width: 0; border: 0; padding: 0 1px; outline: 0; background: none; font-size: 6px; }
.search input::placeholder { color: #aaa; opacity: 1; }
.search svg { width: 9px; height: 9px; }
.tabtools { display: flex; gap: 5px; padding-left: 7px; }
.tabtools button:nth-child(-n+3) svg { width: 9px; height: 9px; }

.ribbon { display: flex; height: 51px; border-bottom: 1px solid #ddd; color: #444; }
.group { display: flex; flex-direction: column; border-right: 1px solid #e3e3e3; padding: 2px 1px 0; }
.items { display: flex; flex: 1; min-height: 0; }
.group footer { display: flex; align-items: center; justify-content: center; height: 7px; margin-top: auto; color: #2b8495; }
.group footer .caret { margin: 0 2px 0 auto; }
.group footer::before { content: ""; margin-right: auto; width: 6px; }
.big { flex-direction: column; justify-content: flex-start; text-align: center; line-height: 9px; white-space: nowrap; height: 40px; }
.big > svg:first-child { width: 18px; height: 18px; margin: 2px 0; }
.big .caret { margin-top: 2px; }
.big:disabled { color: #c6c6c6; }
.boxed > svg:first-child { border: 1px solid #e5e5e5; padding: 4px; width: 20px; }
.w22 { width: 22px; }
.w28 { width: 28px; }
.w38 { width: 38px; }
.gallery { display: grid; grid-template-columns: repeat(3, 18px); grid-template-rows: repeat(2, 18px); border: 1px solid #e6e6e6; align-self: flex-start; margin: 1px 0 0 2px; }
.gallery svg { width: 13px; height: 13px; }
.scroller { display: flex; flex-direction: column; justify-content: space-between; padding: 4px 3px 5px; height: 38px; }
.faint { opacity: .3; }
.stack { display: flex; flex-direction: column; padding: 0 2px; }
.stack button { height: 12px; gap: 2px; justify-content: flex-start; white-space: nowrap; }
.stack button > svg:first-child { width: 9px; height: 9px; }
.pair { display: flex; flex-direction: column; gap: 7px; padding: 4px 1px; }
.g-sketch { padding-left: 5px; }
.g-feature { padding-left: 5px; }
.g-feature .items, .g-sync .items { gap: 1px; }
.g-feature .boxed, .g-sync .boxed { margin-left: 3px; }
.g-edit { padding-left: 2px; }
.g-edit .items { gap: 2px; }
.g-asm { padding-left: 5px; padding-right: 3px; }
.g-end { flex: 1; border: 0; }

.selbar { display: flex; align-items: center; height: 19px; padding: 0 4px 0 6px; border-bottom: 1px solid #aeb1b2; }
.menu { gap: 1px; width: 47px; margin-right: 3px; }
.menu .caret { margin-left: 2px; }
.combo { position: relative; width: 75px; height: 10px; margin-right: 3px; }
.combo select { width: 100%; height: 100%; appearance: none; border: 1px solid #aaa; border-radius: 0; background: #fff; padding: 0 2px; line-height: 8px; }
.combo .caret { position: absolute; right: 3px; top: 3px; pointer-events: none; }
.tools { display: flex; align-items: center; }
.tools button { width: 14px; height: 13px; }
.tools svg:not(.caret) { width: 10px; height: 10px; }
.tools .caret { margin: 0 3px 0 0; }
.tools .on { background: #d1e8eb; }
.sep { width: 1px; height: 12px; margin: 0 2px; background: #ddd; }
.last { margin-left: auto; }

.work { display: flex; flex: 1; min-height: 0; }
.rail { width: 19px; background: #dadbda; display: flex; flex-direction: column; border-left: 2px solid #eee; }
.rail button { height: 24px; }
.rail button:first-child { height: 16px; margin-bottom: 7px; }
.rail button:first-child svg { width: 10px; height: 10px; }
.rail button:nth-child(n+6):nth-child(-n+8) { height: 29px; }
.rail svg { width: 13px; height: 13px; }
.rail .active { background: #fff; }
.panel { width: 185px; display: flex; flex-direction: column; background: #fff; border-right: 2px solid #b7babb; padding: 0 6px 2px 5px; }
.panel header { display: flex; justify-content: space-between; align-items: center; height: 17px; padding: 0 2px 0 1px; font-size: 7px; }
.panel header svg { width: 8px; height: 8px; }
table { width: 100%; border-collapse: collapse; table-layout: fixed; }
th, td { padding: 0 3px; height: 11px; border-right: 1px solid #e8e8e8; text-align: left; font-weight: normal; line-height: 9px; white-space: nowrap; }
th .caret { display: inline-block; margin-left: 6px; width: 5px; height: 5px; }
th { background: #f4f4f4; border-bottom: 1px solid #e2e2e2; }
.tree { display: flex; flex-direction: column; height: 154px; border-bottom: 2px solid #ccc; }
.tree td { font-size: 7px; }
.tree th { font-size: 7px; }
.c-layer { width: 23px; }
.c-new { width: 25px; }
.node { display: flex; align-items: center; gap: 2px; height: 9px; }
.node i { width: 5px; font-style: normal; }
.node svg, .tree td > svg { width: 9px; height: 9px; }
.child { padding-left: 18px; }
.child input { appearance: none; width: 7px; height: 7px; margin: 0; border: 1px solid #257244; background: linear-gradient(135deg, #fff 40%, #278a50 45% 60%, #fff 65%); }
.selected { background: linear-gradient(90deg, #fff 38px, #8ec2c9 38px); }
.selected td { font-weight: bold; }
.rest { flex: 1; background: linear-gradient(90deg, transparent 124px, #ececec 124px 125px, transparent 125px 147px, #ececec 147px 148px, transparent 148px), repeating-linear-gradient(#f9f9f9 0 11px, #fff 11px 22px); }
.hscroll { display: flex; height: 9px; align-items: center; font-size: 10px; }
.hscroll span { width: 10px; text-align: center; }
.track { flex: 1; height: 8px; }
.thumb { width: 72%; height: 100%; background: #cdcdcd; }
.section { justify-content: space-between; height: 14px; padding: 0 2px 0 3px; border-bottom: 1px solid #c4dde1; color: #267b94; font-size: 7px; }
.section svg { width: 7px; height: 7px; }
.details { flex: 1; margin: 2px 4px 2px 3px; border: 1px solid #e7e7e7; overflow: hidden; }
.details tr:nth-child(even) { background: #f8f8f8; }
.d1 { width: 36px; }
.d2 { width: 22px; }
.d3 { width: 49px; }
.viewport { flex: 1; min-width: 0; background: linear-gradient(#b5b6b7, #ced0d1 35%, #e4e6e7 72%, #e6e8e9); }
.viewport svg { width: 100%; height: 100%; }
.axis { font: 11px "Liberation Sans", sans-serif; }
.small { font-size: 9px; }

.status { display: flex; align-items: center; height: 13px; padding: 0 30px 0 3px; border-top: 1px solid #ccc; border-bottom: 2px solid #b4b8b9; font-weight: bold; color: #222; }
.count { margin-left: 301px; }
.sicons { display: flex; gap: 3px; margin-left: auto; opacity: .6; }
.sicons svg { width: 9px; height: 9px; }
```
